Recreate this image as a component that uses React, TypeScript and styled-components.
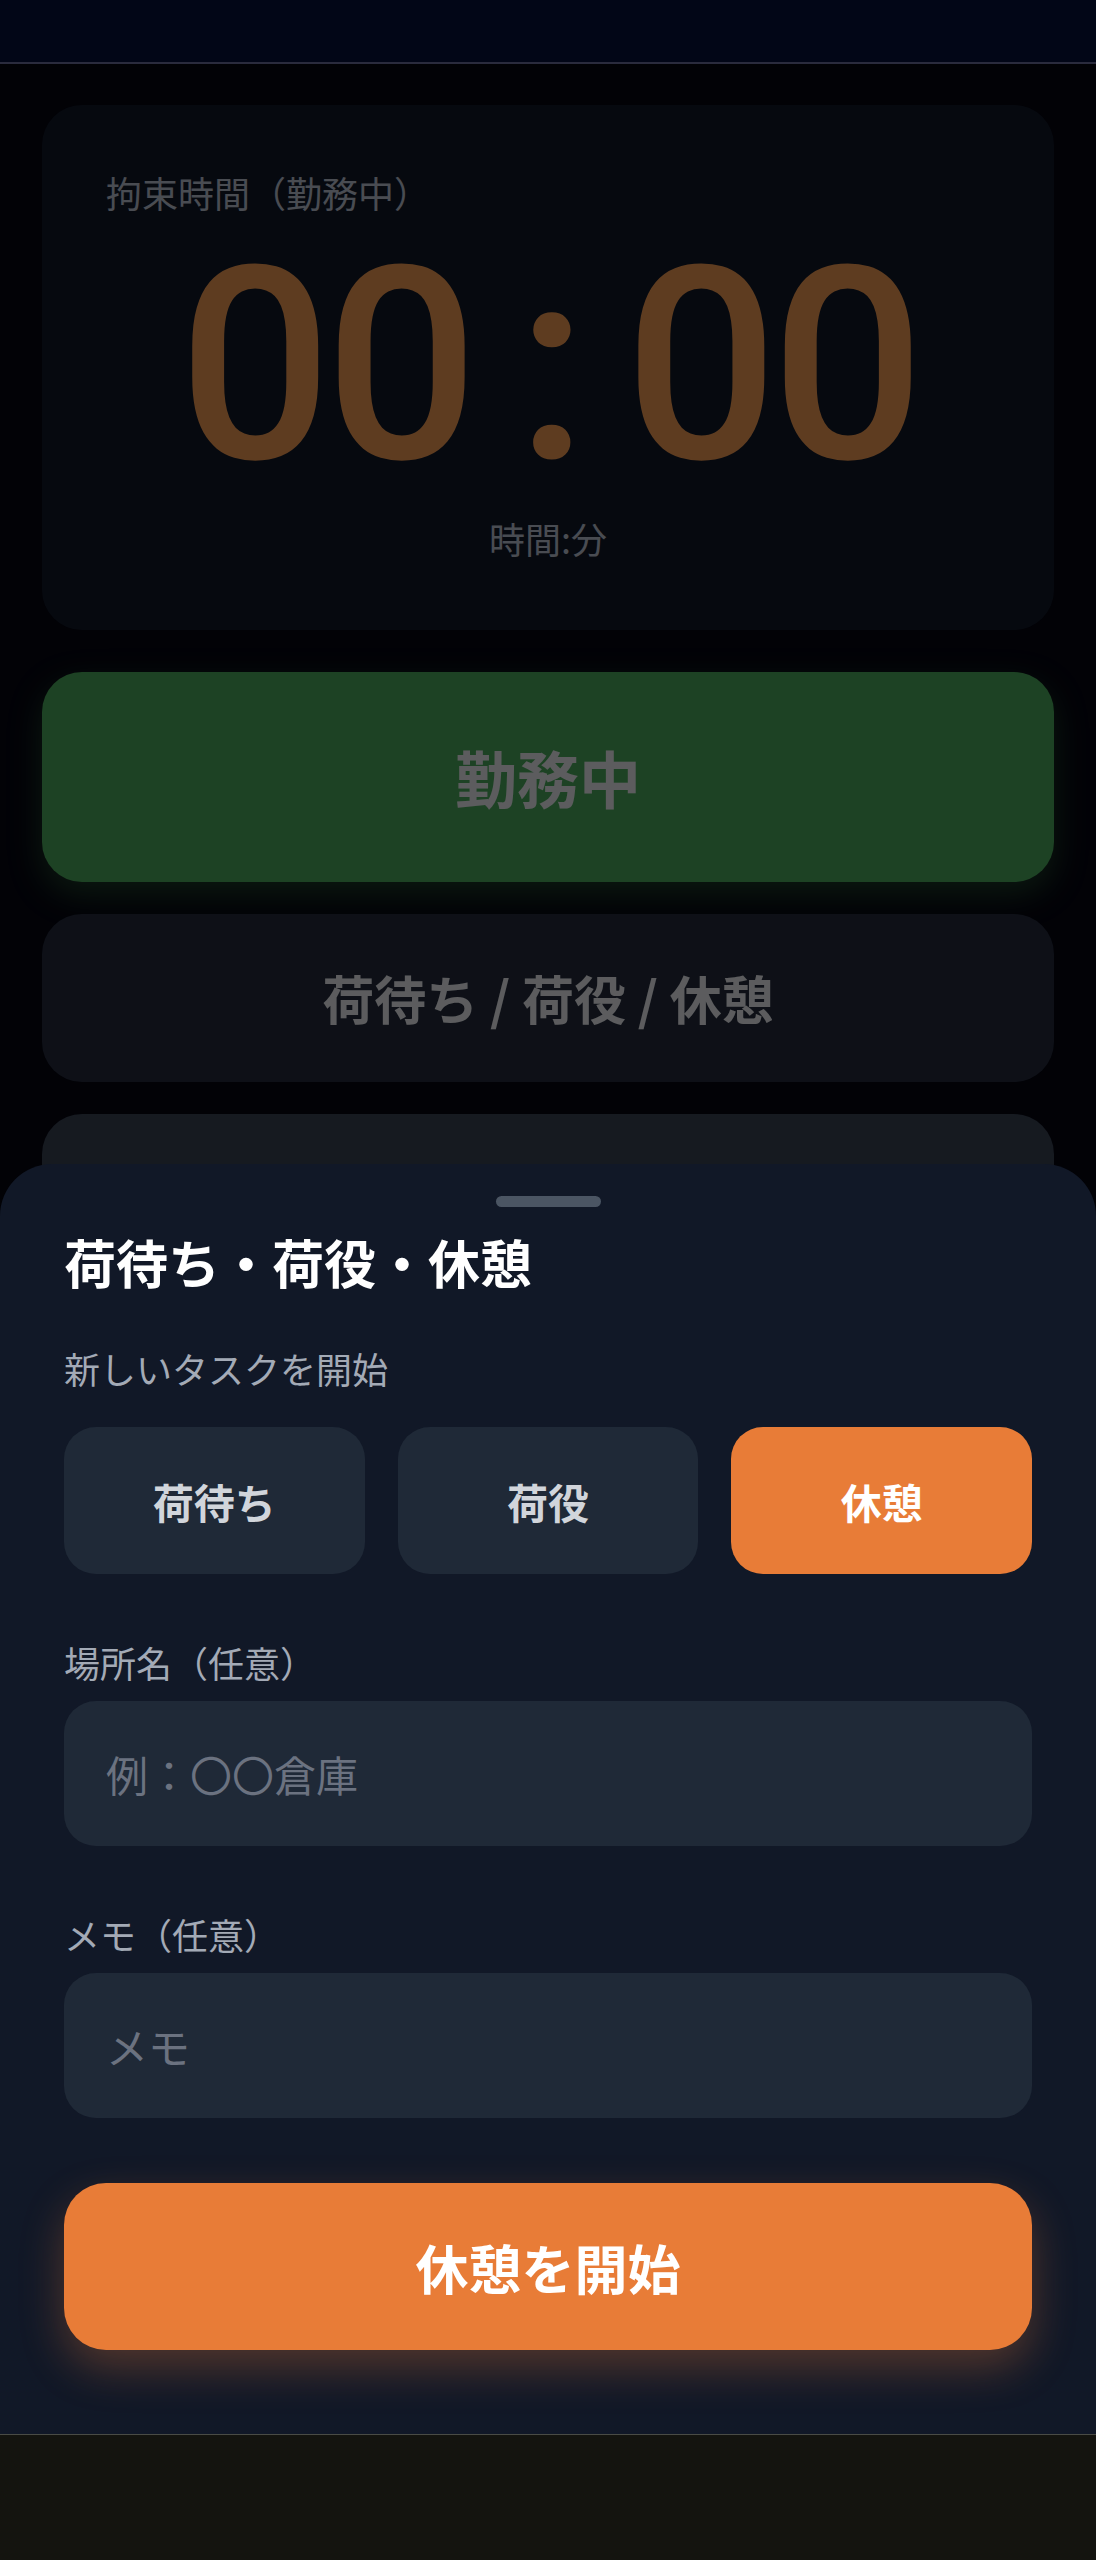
import React, { useState } from "react";
import styled, { createGlobalStyle } from "styled-components";

const GlobalStyle = createGlobalStyle`
  * {
    box-sizing: border-box;
  }
  html,
  body {
    margin: 0;
    padding: 0;
    background: #050510;
  }
  body {
    font-family: "Noto Sans CJK JP", "Noto Sans", sans-serif;
  }
`;

type Tone = "work" | "task" | "end";

const toneColors: Record<Tone, string> = {
  work: "#4aa65a",
  task: "#232a3b",
  end: "#374151",
};

const taskTypes = ["荷待ち", "荷役", "休憩"];

const App = () => {
  const [taskType, setTaskType] = useState("休憩");
  const [place, setPlace] = useState("");
  const [memo, setMemo] = useState("");

  return (
    <Page>
      <GlobalStyle />
      <Header />
      <Main>
        <TimerCard>
          <TimerLabel>拘束時間（勤務中）</TimerLabel>
          <Clock>
            <span>00</span>
            <Colon>:</Colon>
            <span>00</span>
          </Clock>
          <ClockUnit>時間:分</ClockUnit>
        </TimerCard>
        <StatusButton tone="work" height={210} size={62}>
          勤務中
        </StatusButton>
        <StatusButton tone="task" height={168} size={52}>
          荷待ち / 荷役 / 休憩
        </StatusButton>
        <StatusButton tone="end" height={168} size={52}>
          退勤
        </StatusButton>
      </Main>

      <Backdrop />

      <Sheet>
        <Handle />
        <SheetTitle>荷待ち・荷役・休憩</SheetTitle>
        <FieldLabel>新しいタスクを開始</FieldLabel>
        <Segments>
          {taskTypes.map((type) => (
            <Segment
              key={type}
              active={type === taskType}
              onClick={() => setTaskType(type)}
            >
              {type}
            </Segment>
          ))}
        </Segments>

        <FieldLabel className="spaced">場所名（任意）</FieldLabel>
        <TextInput
          placeholder="例：〇〇倉庫"
          value={place}
          onChange={(e) => setPlace(e.target.value)}
        />

        <FieldLabel className="spaced">メモ（任意）</FieldLabel>
        <TextInput
          placeholder="メモ"
          value={memo}
          onChange={(e) => setMemo(e.target.value)}
        />

        <StartButton>{taskType}を開始</StartButton>
      </Sheet>

      <BottomBar />
    </Page>
  );
};

const Page = styled.div`
  min-height: 2560px;
  background: #050510;
`;

const Header = styled.header`
  position: relative;
  z-index: 20;
  height: 64px;
  background: #020617;
  border-bottom: 2px solid #2a2b3d;
`;

const Main = styled.main`
  display: flex;
  flex-direction: column;
  gap: 32px;
  padding: 41px 42px;
`;

const TimerCard = styled.section`
  background: #111827;
  border-radius: 40px;
  padding: 62px 64px 65px;
  margin-bottom: 10px;
`;

const TimerLabel = styled.p`
  margin: 0;
  font-size: 36px;
  line-height: 1.4;
  color: #b6bdcc;
`;

const Clock = styled.div`
  display: flex;
  justify-content: center;
  align-items: baseline;
  margin-top: 28px;
  font-family: Roboto, "Noto Sans CJK JP", sans-serif;
  font-size: 270px;
  font-weight: 500;
  letter-spacing: -7px;
  line-height: 0.9;
  color: #ea9751;
`;

const Colon = styled.span`
  margin: 0 44px 0 45px;
`;

const ClockUnit = styled.p`
  margin: 24px 0 0;
  text-align: center;
  font-size: 36px;
  line-height: 1.45;
  color: #b6bdcc;
`;

const StatusButton = styled.button<{ tone: Tone; height: number; size: number }>`
  display: flex;
  align-items: center;
  justify-content: center;
  width: 100%;
  height: ${({ height }) => height}px;
  border: none;
  border-radius: 40px;
  background: ${({ tone }) => toneColors[tone]};
  color: #e5e7eb;
  font-family: inherit;
  font-size: ${({ size }) => size}px;
  font-weight: 700;
  box-shadow: ${({ tone }) =>
    tone === "work" ? "0 12px 32px rgba(74, 166, 90, 0.35)" : "none"};
`;

const Backdrop = styled.div`
  position: fixed;
  inset: 0;
  z-index: 10;
  background: rgba(0, 0, 0, 0.6);
`;

const Sheet = styled.div`
  position: fixed;
  left: 0;
  right: 0;
  bottom: 126px;
  z-index: 20;
  display: flex;
  flex-direction: column;
  padding: 32px 64px 84px;
  background: #111827;
  border-radius: 52px 52px 0 0;

  .spaced {
    margin-top: 61px;
  }
`;

const Handle = styled.div`
  align-self: center;
  width: 105px;
  height: 11px;
  border-radius: 6px;
  background: #4b5563;
`;

const SheetTitle = styled.h2`
  margin: 21px 0 45px;
  font-size: 52px;
  line-height: 1.3;
  font-weight: 700;
  color: #ffffff;
`;

const FieldLabel = styled.label`
  display: block;
  margin-bottom: 12px;
  font-size: 36px;
  line-height: 1.5;
  color: #a3aab6;
`;

const Segments = styled.div`
  display: grid;
  grid-template-columns: repeat(3, 1fr);
  gap: 33px;
  margin-top: 20px;
`;

const Segment = styled.button<{ active: boolean }>`
  height: 147px;
  border: none;
  border-radius: 32px;
  background: ${({ active }) => (active ? "#e87c37" : "#1f2937")};
  color: ${({ active }) => (active ? "#ffffff" : "#d1d5db")};
  font-family: inherit;
  font-size: 41px;
  font-weight: 700;
  cursor: pointer;
`;

const TextInput = styled.input`
  width: 100%;
  height: 145px;
  padding: 0 42px;
  border: none;
  border-radius: 32px;
  background: #1f2937;
  color: #ffffff;
  font-family: inherit;
  font-size: 42px;
  outline: none;

  &::placeholder {
    color: #6b7280;
  }
`;

const StartButton = styled.button`
  height: 167px;
  margin-top: 65px;
  border: none;
  border-radius: 42px;
  background: #e87c37;
  color: #ffffff;
  font-family: inherit;
  font-size: 53px;
  font-weight: 700;
  box-shadow: 0 18px 44px rgba(232, 124, 55, 0.3);
  cursor: pointer;
`;

const BottomBar = styled.nav`
  position: fixed;
  left: 0;
  right: 0;
  bottom: 0;
  z-index: 20;
  height: 126px;
  background: #14140f;
  border-top: 1px solid #4a4b45;
`;

export default App;
